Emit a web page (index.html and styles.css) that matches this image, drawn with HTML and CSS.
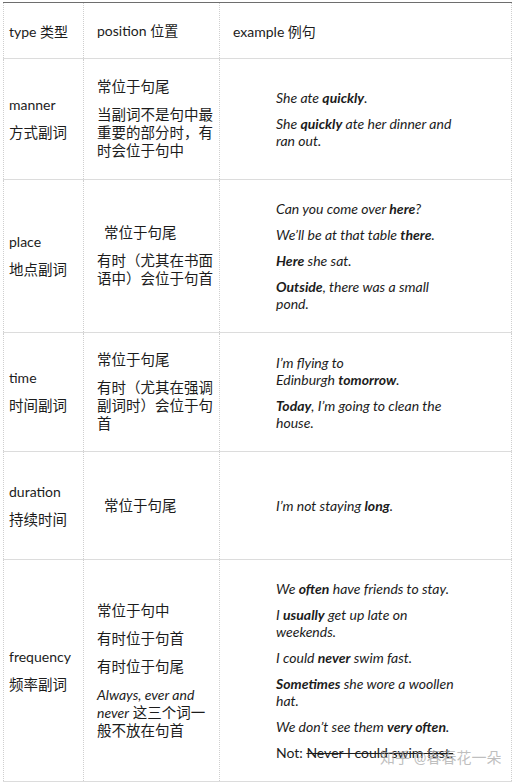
FILE: index.html
```html
<!DOCTYPE html>
<html lang="zh">
<head>
<meta charset="utf-8">
<link rel="stylesheet" href="styles.css">
</head>
<body>
<div class="page">
<table class="grid">
  <colgroup><col class="c1"><col class="c2"><col class="c3"></colgroup>
  <tr class="r-head">
    <td class="t">type 类型</td>
    <td class="p">position 位置</td>
    <td class="e">example 例句</td>
  </tr>
  <tr class="r1">
    <td class="t"><p>manner</p><p class="zh">方式副词</p></td>
    <td class="p"><p>常位于句尾</p><p>当副词不是句中最<br>重要的部分时，有<br>时会位于句中</p></td>
    <td class="e"><div class="ex">
      <p>She ate <b>quickly</b>.</p>
      <p>She <b>quickly</b> ate her dinner and<br>ran out.</p>
    </div></td>
  </tr>
  <tr class="r2">
    <td class="t"><p>place</p><p class="zh">地点副词</p></td>
    <td class="p"><p class="ind">常位于句尾</p><p>有时（尤其在书面<br>语中）会位于句首</p></td>
    <td class="e"><div class="ex">
      <p>Can you come over <b>here</b>?</p>
      <p>We’ll be at that table <b>there</b>.</p>
      <p><b>Here</b> she sat.</p>
      <p><b>Outside</b>, there was a small<br>pond.</p>
    </div></td>
  </tr>
  <tr class="r3">
    <td class="t"><p>time</p><p class="zh">时间副词</p></td>
    <td class="p"><p>常位于句尾</p><p>有时（尤其在强调<br>副词时）会位于句<br>首</p></td>
    <td class="e"><div class="ex">
      <p>I’m flying to<br>Edinburgh <b>tomorrow</b>.</p>
      <p><b>Today</b>, I’m going to clean the<br>house.</p>
    </div></td>
  </tr>
  <tr class="r4">
    <td class="t"><p>duration</p><p class="zh">持续时间</p></td>
    <td class="p"><p class="ind">常位于句尾</p></td>
    <td class="e"><div class="ex">
      <p>I’m not staying <b>long</b>.</p>
    </div></td>
  </tr>
  <tr class="r5">
    <td class="t"><p>frequency</p><p class="zh">频率副词</p></td>
    <td class="p"><p>常位于句中</p><p>有时位于句首</p><p>有时位于句尾</p><p><i>Always, ever and<br>never</i> 这三个词一<br>般不放在句首</p></td>
    <td class="e"><div class="ex">
      <p>We <b>often</b> have friends to stay.</p>
      <p>I <b>usually</b> get up late on<br>weekends.</p>
      <p>I could <b>never</b> swim fast.</p>
      <p><b>Sometimes</b> she wore a woollen<br>hat.</p>
      <p>We don’t see them <b>very often</b>.</p>
      <p class="not">Not: <s>Never I could swim fast.</s></p>
    </div>
    <span class="mark">知乎 @春春花一朵</span></td>
  </tr>
</table>
</div>
</body>
</html>
```

FILE: styles.css
```css
html, body {
  margin: 0;
  padding: 0;
  background: #fff;
}
body {
  font-family: Lato, "Noto Sans CJK SC", sans-serif;
  color: #1c1c1c;
  font-size: 14px;
}
.page {
  padding: 2px 3px 0 3px;
}
.grid {
  border-collapse: collapse;
  table-layout: fixed;
  width: 508px;
  border-top: 1px solid #6e6e6e;
}
.c1 { width: 80px; }
.c2 { width: 136px; }
.c3 { width: 292px; }
.grid td {
  border-left: 1px dotted #cfcfcf;
  border-right: 1px dotted #cfcfcf;
  border-bottom: 1px solid #dcdcdc;
  vertical-align: middle;
  padding: 0;
}
.grid p { margin: 0; }
.r-head { height: 56px; }
.r1 { height: 121px; }
.r2 { height: 153px; }
.r3 { height: 119px; }
.r4 { height: 108px; }
.r5 { height: 222px; }

td.t { padding-left: 5px; }
td.p { padding-left: 13px; font-size: 14.5px; line-height: 18px; }
td.e { padding-left: 13px; position: relative; }

.r-head td { font-size: 14px; }

td.t p { line-height: 18px; }
td.t p + p { margin-top: 10px; }
td.t .zh { font-size: 14.5px; }

td.p p + p { margin-top: 10px; }
td.p .ind { padding-left: 7px; }
td.p i { font-size: 14px; }

.ex {
  margin-left: 43px;
  font-style: italic;
  font-size: 14px;
  line-height: 17px;
}
.ex p + p { margin-top: 9px; }
.ex b { font-weight: 700; }
.ex .not { font-style: normal; font-size: 14px; }
.ex .not s { text-decoration-thickness: 1px; }

.mark {
  position: absolute;
  left: 160px;
  top: 186px;
  font-size: 15px;
  color: rgba(170, 170, 170, 0.75);
  white-space: nowrap;
}
```
